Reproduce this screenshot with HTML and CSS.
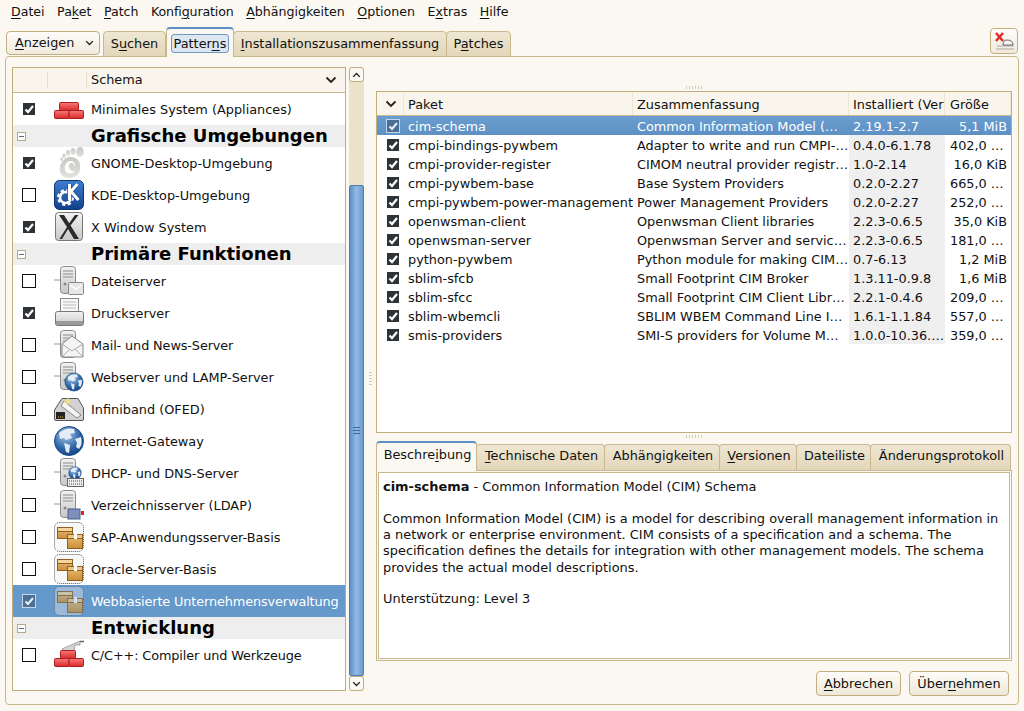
FILE: index.html
```html
<!DOCTYPE html>
<html lang="de">
<head>
<meta charset="utf-8">
<title>Software</title>
<link rel="stylesheet" href="styles.css">
</head>
<body>
<svg class="defs" aria-hidden="true">
  <defs>
    <linearGradient id="gRed" x1="0" y1="0" x2="0" y2="1"><stop offset="0" stop-color="#f87a7a"/><stop offset="1" stop-color="#dc2a2a"/></linearGradient>
    <linearGradient id="gBlue" x1="0" y1="0" x2="0" y2="1"><stop offset="0" stop-color="#3f7fd0"/><stop offset="1" stop-color="#123f8c"/></linearGradient>
    <linearGradient id="gGray" x1="0" y1="0" x2="0" y2="1"><stop offset="0" stop-color="#f2f2f2"/><stop offset="1" stop-color="#c8c8c8"/></linearGradient>
    <linearGradient id="gFoot" x1="0" y1="0" x2="0" y2="1"><stop offset="0" stop-color="#c6c6c2"/><stop offset="1" stop-color="#e2e2df"/></linearGradient>
    <linearGradient id="gBox" x1="0" y1="0" x2="0" y2="1"><stop offset="0" stop-color="#edbe72"/><stop offset="1" stop-color="#c98f3c"/></linearGradient>
    <radialGradient id="gGlobe" cx=".4" cy=".3" r=".8"><stop offset="0" stop-color="#a9c6e8"/><stop offset=".6" stop-color="#2d64a8"/><stop offset="1" stop-color="#0f3a78"/></radialGradient>

    <symbol id="i-bricks" viewBox="0 0 32 32">
      <rect x="6.500" y="9.500" width="19" height="8" rx="1" fill="url(#gRed)" stroke="#a81e1e"/>
      <rect x="1.500" y="17.500" width="14.500" height="8" rx="1" fill="url(#gRed)" stroke="#a81e1e"/>
      <rect x="16" y="17.500" width="14.500" height="8" rx="1" fill="url(#gRed)" stroke="#a81e1e"/>
    </symbol>
    <symbol id="i-devel" viewBox="0 0 32 32">
      <path d="M9 10 L27 2 L27 6 L22 6 L21 12 Q14 15 9 10Z" fill="#d4d4d4" stroke="#8a8a8a" stroke-width=".7"/>
      <path d="M27 2.500h4" stroke="#666" stroke-width="1.500"/>
      <rect x="7.500" y="11.500" width="15" height="8" rx="1" fill="url(#gRed)" stroke="#a81e1e"/>
      <rect x="1.500" y="19.500" width="14.500" height="8" rx="1" fill="url(#gRed)" stroke="#a81e1e"/>
      <rect x="16" y="19.500" width="14.500" height="8" rx="1" fill="url(#gRed)" stroke="#a81e1e"/>
    </symbol>
    <symbol id="i-gnome" viewBox="0 0 32 32">
      <g fill="url(#gFoot)">
        <ellipse cx="27" cy="5" rx="3.800" ry="5"/>
        <ellipse cx="20" cy="4.500" rx="2.400" ry="3.500"/>
        <ellipse cx="15" cy="6" rx="2" ry="3"/>
        <ellipse cx="11" cy="9" rx="1.700" ry="2.500"/>
        <ellipse cx="8.500" cy="12.500" rx="1.400" ry="2"/>
        <path d="M17 10 C24 10 28 14 27 22 C26 29 21 31 16 31 C9 31 6 26 7 20 C8 15 12 10 17 10Z M17 22 C15 20 15 17 18 16 C21 16 22 18 21 20 C23 19 22 14 18 14 C13 14 11 19 12 23 C13 27 19 28 22 24 C20 25 18 24 17 22Z" fill-rule="evenodd"/>
      </g>
    </symbol>
    <symbol id="i-kde" viewBox="0 0 32 32">
      <rect x="1.500" y="1.500" width="29" height="29" rx="5" fill="url(#gBlue)" stroke="#0f3472"/>
      <circle cx="12.500" cy="18.500" r="6.500" fill="none" stroke="#fff" stroke-width="4" stroke-dasharray="2.800 2.300"/>
      <circle cx="12.500" cy="18.500" r="5.500" fill="none" stroke="#fff" stroke-width="2.500"/>
      <path d="M16.500 5v16M16.500 14L24.500 5M17.500 12L25.500 21" fill="none" stroke="#1c55a8" stroke-width="4.500"/>
      <path d="M16.500 5v16M16.500 14L24.500 5M17.500 12L25.500 21" fill="none" stroke="#fff" stroke-width="3"/>
    </symbol>
    <symbol id="i-x" viewBox="0 0 32 32">
      <rect x="2.500" y="1.500" width="27" height="28" rx="3" fill="url(#gGray)" stroke="#777"/>
      <path d="M6 4H11L26 28H21L15 18L9 28H6.500L14 16ZM22 4H25.500L17.500 14.500L16 12.500Z" fill="#2a2a2a"/>
    </symbol>
    <symbol id="i-server" viewBox="0 0 32 32">
      <path d="M1 15h6" stroke="#b8b8b8" stroke-width="1.500"/>
      <rect x="7.500" y="1.500" width="15" height="27" rx="3" fill="url(#gGray)" stroke="#8a8a8a"/>
      <path d="M10 6h10M10 9h10M10 12h10" stroke="#aaa" stroke-width="1.500"/>
      <circle cx="12" cy="19" r="1.500" fill="#888"/>
    </symbol>
    <symbol id="i-globe" viewBox="0 0 32 32">
      <circle cx="16" cy="16" r="14.500" fill="url(#gGlobe)" stroke="#1b4a88"/>
      <path d="M6 8 Q13 2 21 4 L22 8 L17 9 L19 13 L13 15 L11 13 L7 14Z M22 14 L28 12 Q30 19 26 24 L23 22 L24 18Z M11 18 L17 20 L16 28 L13 27Z" fill="#e4edf6"/>
    </symbol>
    <symbol id="i-box" viewBox="0 0 32 32">
      <rect x="1.500" y="1.500" width="29" height="29" rx="5" fill="#f2f2f2" fill-opacity=".55" stroke="#555" stroke-dasharray="1 1"/>
      <rect x="4.500" y="6.500" width="15" height="11" fill="url(#gBox)" stroke="#8d6020"/>
      <rect x="4.500" y="6.500" width="15" height="4" fill="#f4d49c" stroke="#8d6020"/>
      <rect x="14.500" y="13.500" width="15" height="14" fill="url(#gBox)" stroke="#8d6020"/>
      <rect x="14.500" y="13.500" width="15" height="4" fill="#eec98a" stroke="#8d6020"/>
      <rect x="21" y="12" width="3" height="6" fill="#fff"/>
    </symbol>
    <symbol id="o-mail" viewBox="0 0 32 32">
      <path d="M9 15 L19 7 L30 15 V28 H9Z" fill="#f4f4f4" stroke="#888"/>
      <path d="M9 15 L19 22 L30 15M9 28L17 20M30 28L22 20" fill="none" stroke="#aaa"/>
    </symbol>
    <symbol id="o-file" viewBox="0 0 32 32">
      <rect x="15.500" y="17.500" width="15" height="12" rx="1" fill="#e6e6e6" stroke="#8a8a8a"/>
      <path d="M17 20 L23 24 L29 20" fill="none" stroke="#fff" stroke-width="1.500"/>
    </symbol>
    <symbol id="i-printer" viewBox="0 0 32 32">
      <rect x="7.500" y="1.500" width="18" height="14" fill="#f7f7f7" stroke="#888"/>
      <path d="M10 5h13M10 8h13M10 11h13" stroke="#bbb"/>
      <rect x="2.500" y="14.500" width="28" height="14" rx="2" fill="url(#gGray)" stroke="#777"/>
      <rect x="3" y="24" width="27" height="4" fill="#9a9a9a"/>
    </symbol>
    <symbol id="i-infiniband" viewBox="0 0 32 32">
      <path d="M1.500 26 L1.500 17 L9 5.500 H25 L30.500 15 V26 Q30.500 27.500 29 27.500 H3 Q1.500 27.500 1.500 26Z" fill="#d2d2d2" stroke="#555"/>
      <path d="M11 8 L28 22 L24 25 L8 13Z" fill="#f4f4f4" stroke="#888"/>
      <path d="M11 8 L15 5 L18 9 L14 12Z" fill="#f2dc8c"/>
      <rect x="3" y="19" width="9" height="7" fill="#222"/>
      <path d="M5 24h1M7 24h1M9 24h1" stroke="#e8c84a"/>
    </symbol>
    <symbol id="o-keyboard" viewBox="0 0 32 32">
      <rect x="14.500" y="21.500" width="16" height="8" fill="#eee" stroke="#666"/>
      <path d="M16 24h13M16 27h13" stroke="#444" stroke-dasharray="1 1"/>
    </symbol>
    <symbol id="o-ldap" viewBox="0 0 32 32">
      <rect x="15" y="20" width="12" height="10" fill="#7d8fbd" stroke="#4d5c8a"/>
      <rect x="28" y="22" width="3" height="4" fill="#d22"/>
    </symbol>

    <symbol id="c-on" viewBox="0 0 14 14">
      <rect x="1" y="1" width="12" height="12" fill="#2e3338"/>
      <path d="M3.500 7.500 L6 10 L11 4" fill="none" stroke="#fff" stroke-width="2.200"/>
    </symbol>
    <symbol id="c-off" viewBox="0 0 14 14">
      <rect x=".5" y=".5" width="13" height="13" fill="#fff" stroke="#111"/>
    </symbol>
    <symbol id="c-sel" viewBox="0 0 14 14">
      <rect x=".5" y=".5" width="13" height="13" fill="#4c6f97" stroke="#c5d6e8"/>
      <path d="M3.500 7.500 L6 10 L11 4" fill="none" stroke="#e8f0f8" stroke-width="2"/>
    </symbol>
    <symbol id="chev" viewBox="0 0 12 8">
      <path d="M1.500 1.500 L6 6 L10.500 1.500" fill="none" stroke="currentColor" stroke-width="1.800"/>
    </symbol>
  </defs>
</svg>

<nav class="menubar">
  <span><u>D</u>atei</span><span>Pa<u>k</u>et</span><span><u>P</u>atch</span><span class="tight">Konfi<u>g</u>uration</span><span><u>A</u>bhängigkeiten</span><span><u>O</u>ptionen</span><span>E<u>x</u>tras</span><span><u>H</u>ilfe</span>
</nav>

<div class="tabbar">
  <div class="combo"><span><u>A</u>nzeigen</span><svg class="chev-s"><use href="#chev"/></svg></div>
  <div class="tab tab-suchen">S<u>u</u>chen</div>
  <div class="tab tab-active"><span class="focus">Patter<u>n</u>s</span></div>
  <div class="tab tab-inst"><u>I</u>nstallationszusammenfassung</div>
  <div class="tab tab-patches">P<u>a</u>tches</div>
  <div class="tabbar-fill"></div>
  <button class="iconbtn" type="button" aria-label="Abmelden">
    <svg width="22" height="22" viewBox="0 0 22 22">
      <path d="M3 19h18M4 16h17" stroke="#a8a8a8"/>
      <path d="M10 15 Q10 10 14 10 Q20 10 20 15Z" fill="#f6f6f6" stroke="#666"/>
      <path d="M3 3 L10 11 M10 3 L3 11" stroke="#e02b2b" stroke-width="2.500"/>
    </svg>
  </button>
</div>

<main class="panel">
  <section class="patterns">
    <div class="plist">
      <div class="phead"><span class="ph1"></span><span class="ph2"></span><span class="ph3">Schema</span><svg class="chev-s"><use href="#chev"/></svg></div>

      <div class="prow"><svg class="chk"><use href="#c-on"/></svg><svg class="ico"><use href="#i-bricks"/></svg><span>Minimales System (Appliances)</span></div>
      <div class="pgroup"><span class="exp"></span><span>Grafische Umgebungen</span></div>
      <div class="prow"><svg class="chk"><use href="#c-on"/></svg><svg class="ico"><use href="#i-gnome"/></svg><span>GNOME-Desktop-Umgebung</span></div>
      <div class="prow"><svg class="chk"><use href="#c-off"/></svg><svg class="ico"><use href="#i-kde"/></svg><span>KDE-Desktop-Umgebung</span></div>
      <div class="prow"><svg class="chk"><use href="#c-on"/></svg><svg class="ico"><use href="#i-x"/></svg><span>X Window System</span></div>
      <div class="pgroup"><span class="exp"></span><span>Primäre Funktionen</span></div>
      <div class="prow"><svg class="chk"><use href="#c-off"/></svg><svg class="ico"><use href="#i-server"/><use href="#o-file"/></svg><span>Dateiserver</span></div>
      <div class="prow"><svg class="chk"><use href="#c-on"/></svg><svg class="ico"><use href="#i-printer"/></svg><span>Druckserver</span></div>
      <div class="prow"><svg class="chk"><use href="#c-off"/></svg><svg class="ico"><use href="#i-server"/><use href="#o-mail"/></svg><span class="tight">Mail- und News-Server</span></div>
      <div class="prow"><svg class="chk"><use href="#c-off"/></svg><svg class="ico"><use href="#i-server"/><use href="#i-globe" x="11" y="11" width="20" height="20"/></svg><span>Webserver und LAMP-Server</span></div>
      <div class="prow"><svg class="chk"><use href="#c-off"/></svg><svg class="ico"><use href="#i-infiniband"/></svg><span>Infiniband (OFED)</span></div>
      <div class="prow"><svg class="chk"><use href="#c-off"/></svg><svg class="ico"><use href="#i-globe"/></svg><span>Internet-Gateway</span></div>
      <div class="prow"><svg class="chk"><use href="#c-off"/></svg><svg class="ico"><use href="#i-server"/><use href="#i-globe" x="15" y="9" width="14" height="14"/><use href="#o-keyboard"/></svg><span>DHCP- und DNS-Server</span></div>
      <div class="prow"><svg class="chk"><use href="#c-off"/></svg><svg class="ico"><use href="#i-server"/><use href="#o-ldap"/></svg><span>Verzeichnisserver (LDAP)</span></div>
      <div class="prow"><svg class="chk"><use href="#c-off"/></svg><svg class="ico"><use href="#i-box"/></svg><span>SAP-Anwendungsserver-Basis</span></div>
      <div class="prow"><svg class="chk"><use href="#c-off"/></svg><svg class="ico"><use href="#i-box"/></svg><span>Oracle-Server-Basis</span></div>
      <div class="prow prow-sel"><svg class="chk"><use href="#c-sel"/></svg><svg class="ico ico-dim"><use href="#i-box"/></svg><span class="tight">Webbasierte Unternehmensverwaltung</span></div>
      <div class="pgroup"><span class="exp"></span><span>Entwicklung</span></div>
      <div class="prow"><svg class="chk"><use href="#c-off"/></svg><svg class="ico"><use href="#i-devel"/></svg><span class="tight">C/C++: Compiler und Werkzeuge</span></div>
    </div>
    <div class="scroll">
      <div class="sbtn"><svg class="sarrow sarrow-up"><use href="#chev"/></svg></div>
      <div class="sgap"></div>
      <div class="sthumb"><span class="grip"></span></div>
      <div class="sbtn"><svg class="sarrow"><use href="#chev"/></svg></div>
    </div>
    <div class="vhandle"><span class="dots-v"></span></div>
  </section>

  <section class="right">
    <div class="hhandle hhandle-top"><span class="dots-h"></span></div>
    <div class="pkgs">
      <div class="row thead">
        <span class="c0"><svg class="chev-s"><use href="#chev"/></svg></span>
        <span class="c1">Paket</span><span class="c2">Zusammenfassung</span><span class="c3">Installiert (Ver</span><span class="c4 left">Größe</span>
      </div>
      <div class="row row-sel"><span class="c0"><svg class="chk2"><use href="#c-sel"/></svg></span><span class="c1">cim-schema</span><span class="c2">Common Information Model (…</span><span class="c3">2.19.1-2.7</span><span class="c4">5,1 MiB</span></div>
      <div class="row"><span class="c0"><svg class="chk2"><use href="#c-on"/></svg></span><span class="c1">cmpi-bindings-pywbem</span><span class="c2">Adapter to write and run CMPI-…</span><span class="c3">0.4.0-6.1.78</span><span class="c4 left">402,0 …</span></div>
      <div class="row"><span class="c0"><svg class="chk2"><use href="#c-on"/></svg></span><span class="c1">cmpi-provider-register</span><span class="c2">CIMOM neutral provider registr…</span><span class="c3">1.0-2.14</span><span class="c4">16,0 KiB</span></div>
      <div class="row"><span class="c0"><svg class="chk2"><use href="#c-on"/></svg></span><span class="c1">cmpi-pywbem-base</span><span class="c2">Base System Providers</span><span class="c3">0.2.0-2.27</span><span class="c4 left">665,0 …</span></div>
      <div class="row"><span class="c0"><svg class="chk2"><use href="#c-on"/></svg></span><span class="c1">cmpi-pywbem-power-management</span><span class="c2">Power Management Providers</span><span class="c3">0.2.0-2.27</span><span class="c4 left">252,0 …</span></div>
      <div class="row"><span class="c0"><svg class="chk2"><use href="#c-on"/></svg></span><span class="c1">openwsman-client</span><span class="c2">Openwsman Client libraries</span><span class="c3">2.2.3-0.6.5</span><span class="c4">35,0 KiB</span></div>
      <div class="row"><span class="c0"><svg class="chk2"><use href="#c-on"/></svg></span><span class="c1">openwsman-server</span><span class="c2">Openwsman Server and servic…</span><span class="c3">2.2.3-0.6.5</span><span class="c4 left">181,0 …</span></div>
      <div class="row"><span class="c0"><svg class="chk2"><use href="#c-on"/></svg></span><span class="c1">python-pywbem</span><span class="c2">Python module for making CIM…</span><span class="c3">0.7-6.13</span><span class="c4">1,2 MiB</span></div>
      <div class="row"><span class="c0"><svg class="chk2"><use href="#c-on"/></svg></span><span class="c1">sblim-sfcb</span><span class="c2">Small Footprint CIM Broker</span><span class="c3">1.3.11-0.9.8</span><span class="c4">1,6 MiB</span></div>
      <div class="row"><span class="c0"><svg class="chk2"><use href="#c-on"/></svg></span><span class="c1">sblim-sfcc</span><span class="c2">Small Footprint CIM Client Libr…</span><span class="c3">2.2.1-0.4.6</span><span class="c4 left">209,0 …</span></div>
      <div class="row"><span class="c0"><svg class="chk2"><use href="#c-on"/></svg></span><span class="c1">sblim-wbemcli</span><span class="c2">SBLIM WBEM Command Line I…</span><span class="c3">1.6.1-1.1.84</span><span class="c4 left">557,0 …</span></div>
      <div class="row"><span class="c0"><svg class="chk2"><use href="#c-on"/></svg></span><span class="c1">smis-providers</span><span class="c2">SMI-S providers for Volume M…</span><span class="c3">1.0.0-10.36.…</span><span class="c4 left">359,0 …</span></div>
    </div>
    <div class="hhandle hhandle-mid"><span class="dots-h"></span></div>
    <div class="dtabs">
      <div class="dtab dtab-active">Beschre<u>i</u>bung</div>
      <div class="dtab dt2"><u>T</u>echnische Daten</div>
      <div class="dtab dt3">Abhängigkeiten</div>
      <div class="dtab dt4"><u>V</u>ersionen</div>
      <div class="dtab dt5">Dateiliste</div>
      <div class="dtab dt6">Änderungsprotokoll</div>
    </div>
    <div class="dframe">
      <div class="dtext">
        <p><b>cim-schema</b> - Common Information Model (CIM) Schema</p>
        <p>Common Information Model (CIM) is a model for describing overall management information in a network or enterprise environment. CIM consists of a specification and a schema. The specification defines the details for integration with other management models. The schema provides the actual model descriptions.</p>
        <p>Unterstützung: Level 3</p>
      </div>
    </div>
    <div class="actions">
      <button class="btn btn-cancel" type="button"><u>A</u>bbrechen</button>
      <button class="btn btn-apply" type="button">Über<u>n</u>ehmen</button>
    </div>
  </section>
</main>
</body>
</html>
```
FILE: styles.css
```css
* { box-sizing: border-box; }
html, body { margin: 0; height: 100%; }
body {
  width: 1024px;
  height: 711px;
  overflow: hidden;
  display: flex;
  flex-direction: column;
  background: #fbf8f1;
  color: #111;
  font: 12.85px/16px "DejaVu Sans", sans-serif;
}
.defs { display: block; width: 0; height: 0; }
u { text-underline-offset: 2px; }

.menubar { display: flex; gap: 12.5px; height: 24px; padding: 4px 0 0 11px; flex: none; font-size: 12.6px; }

.tabbar { display: flex; align-items: flex-end; height: 33px; flex: none; padding-left: 6px; margin-bottom: -1px; }
.combo {
  display: flex; align-items: center; justify-content: space-between;
  width: 94px; height: 24px; margin: 0 3px 2px 0; padding: 0 5px 0 8px;
  background: linear-gradient(#fdfcf9, #f1ebdd);
  border: 1px solid #c4ad7c; border-radius: 4px;
}
.chev-s { width: 12px; height: 8px; color: #222; flex: none; }
.combo .chev-s { width: 9px; height: 6px; }
.tab {
  height: 26px; padding: 4px 0 0; text-align: center;
  background: linear-gradient(#efe7d3, #e3d6b9);
  border: 1px solid #c9b78e; border-bottom: 1px solid #c9b78e; border-radius: 4px 4px 0 0;
}
.tab-suchen { width: 63px; }
.tab-inst { width: 214px; margin-left: -1px; }
.tab-patches { width: 65px; margin-left: -1px; }
.tab-active {
  position: relative; z-index: 1;
  width: 68px; height: 30px; padding: 5px 4px 0;
  background: #fbf8f1; border-color: #c9b78e; border-top: 2px solid #5d90c4; border-bottom: 0;
}
.focus {
  display: block; height: 19px; line-height: 17px;
  background: #dce7f2; border: 1px solid #6f97c0; border-radius: 3px;
}
.tabbar-fill { flex: 1; }
.iconbtn {
  width: 28px; height: 26px; margin: 0 6px 3px 0; padding: 0;
  display: flex; align-items: center; justify-content: center;
  background: linear-gradient(#fdfcf9, #f1ebdd);
  border: 1px solid #c4ad7c; border-radius: 4px;
}

.panel {
  flex: none; display: flex; width: 1014px; height: 649px; margin-left: 5px;
  padding: 10px 6px 0 6px;
  border: 1px solid #c9b78e; border-radius: 4px;
  background: #fbf8f1;
}
.patterns { display: flex; flex: none; height: 624px; }
.plist { width: 334px; border: 1px solid #c4ad7c; background: #fff; overflow: hidden; flex: none; }
.phead {
  display: flex; align-items: center; height: 25px; padding-right: 8px;
  background: #f9f5ec; border-bottom: 1px solid #c9b78e;
}
.ph1, .ph2, .ph3 { height: 16px; border-right: 1px solid #e7dfc8; }
.ph1 { width: 35px; }
.ph2 { width: 39px; }
.ph3 { flex: 1; padding-left: 4px; border-right: 0; }
.prow { display: flex; align-items: center; height: 32px; }
.prow > span { padding-top: 1px; }
.chk { width: 14px; height: 14px; margin-left: 9px; flex: none; }
.ico { width: 32px; height: 32px; margin: 0 6px 0 17px; flex: none; }
.ico-dim { opacity: .7; }
.tight { letter-spacing: -.12px; }
.prow-sel { background: #6598cb; color: #fff; }
.pgroup { display: flex; align-items: center; height: 22px; background: #eee; font-weight: bold; font-size: 18px; line-height: 22px; color: #000; }
.exp {
  width: 9px; height: 9px; margin: 0 65px 0 4px; flex: none;
  border: 1px solid #bba983; background: linear-gradient(#666, #666) center / 5px 1px no-repeat #fff;
}

.scroll { width: 15px; margin-left: 3px; display: flex; flex-direction: column; background: #ebe2cc; flex: none; border-radius: 3px; }
.sbtn {
  height: 15px; flex: none; display: flex; align-items: center; justify-content: center;
  background: #fbf9f3; border: 1px solid #c4ad7c; border-radius: 3px;
}
.sarrow { width: 9px; height: 6px; color: #222; }
.sarrow-up { transform: rotate(180deg); }
.sgap { height: 103px; flex: none; }
.sthumb {
  flex: 1; display: flex; align-items: center; justify-content: center;
  background: linear-gradient(90deg, #5f92c8, #93bae2 50%, #6a9bcf);
  border: 1px solid #4d7eb3; border-radius: 2px;
}
.grip { width: 7px; height: 7px; background: repeating-linear-gradient(#3f6a9a 0 1px, transparent 1px 3px); }
.vhandle { width: 12px; display: flex; align-items: center; justify-content: center; flex: none; }
.dots-v { width: 3px; height: 15px; background: repeating-linear-gradient(#d5cbb2 0 1px, transparent 1px 3px); }

.right { display: flex; flex-direction: column; width: 636px; flex: none; }
.hhandle { display: flex; align-items: center; justify-content: center; flex: none; }
.hhandle-top { height: 24px; padding-top: 17px; }
.hhandle-mid { height: 7px; }
.dots-h { width: 17px; height: 3px; background: repeating-linear-gradient(90deg, #d5cbb2 0 1px, transparent 1px 3px); }
.pkgs { height: 342px; flex: none; border: 1px solid #c4ad7c; background: #fff; overflow: hidden; }
.row { display: grid; grid-template-columns: 27px 229px 216px 96px 66px; height: 19px; line-height: 18px; white-space: nowrap; }
.thead { height: 24px; line-height: 25px; background: #f9f5ec; border-bottom: 1px solid #c9b78e; }
.row > span { padding: 2px 0 0 4px; overflow: hidden; }
.thead > span { padding-top: 0; }
.row .c0 { padding: 0 0 0 9px; display: flex; align-items: center; }
.thead .c0 { padding-left: 8px; }
.thead span { box-shadow: inset -1px 0 0 #eee6d2; }
.chk2 { width: 14px; height: 14px; }
.row .c3 { background: #efefef; }
.thead .c3 { background: transparent; }
.row .c4 { text-align: right; padding: 2px 4px 0 0; }
.row .c4.left { text-align: left; padding: 2px 0 0 5px; }
.thead .c4.left { padding-top: 0; }
.row-sel { background: linear-gradient(#6a9dd0, #5e90c4); color: #fff; }
.row-sel .c3 { background: transparent; }

.dtabs { display: flex; align-items: flex-end; height: 30px; margin-top: 0; flex: none; }
.dtab {
  height: 26px; padding: 3px 0 0 2px; text-align: center;
  background: linear-gradient(#efe7d3, #e3d6b9);
  border: 1px solid #c9b78e; border-bottom: 0; margin-left: -1px; border-radius: 4px 4px 0 0;
}
.dtab-active {
  width: 101px; height: 30px; margin-left: 0; padding-top: 4px; margin-bottom: -1px;
  background: #fbf8f1; border-top: 2px solid #5d90c4; position: relative; z-index: 1;
}
.dt2 { width: 129px; }
.dt3 { width: 116px; }
.dt4 { width: 78px; }
.dt5 { width: 75px; }
.dt6 { width: 141px; }
.dframe { flex: none; height: 191px; border: 1px solid #c9b78e; padding: 1px; background: #fbf8f1; }
.dtext { height: 100%; border: 1px solid #c9b78e; background: #fff; padding: 6px 4px; font-size: 12.93px; line-height: 16.3px; }
.dtext p { margin: 0 0 15.5px; }
.actions { display: flex; justify-content: flex-end; gap: 8px; padding: 10px 3px 0 0; flex: none; }
.btn {
  height: 25px; padding: 0; font: inherit; color: inherit;
  background: linear-gradient(#fdfcf9, #efe8d8);
  border: 1px solid #c4ad7c; border-radius: 4px;
}
.btn-cancel { width: 85px; }
.btn-apply { width: 100px; }
```
